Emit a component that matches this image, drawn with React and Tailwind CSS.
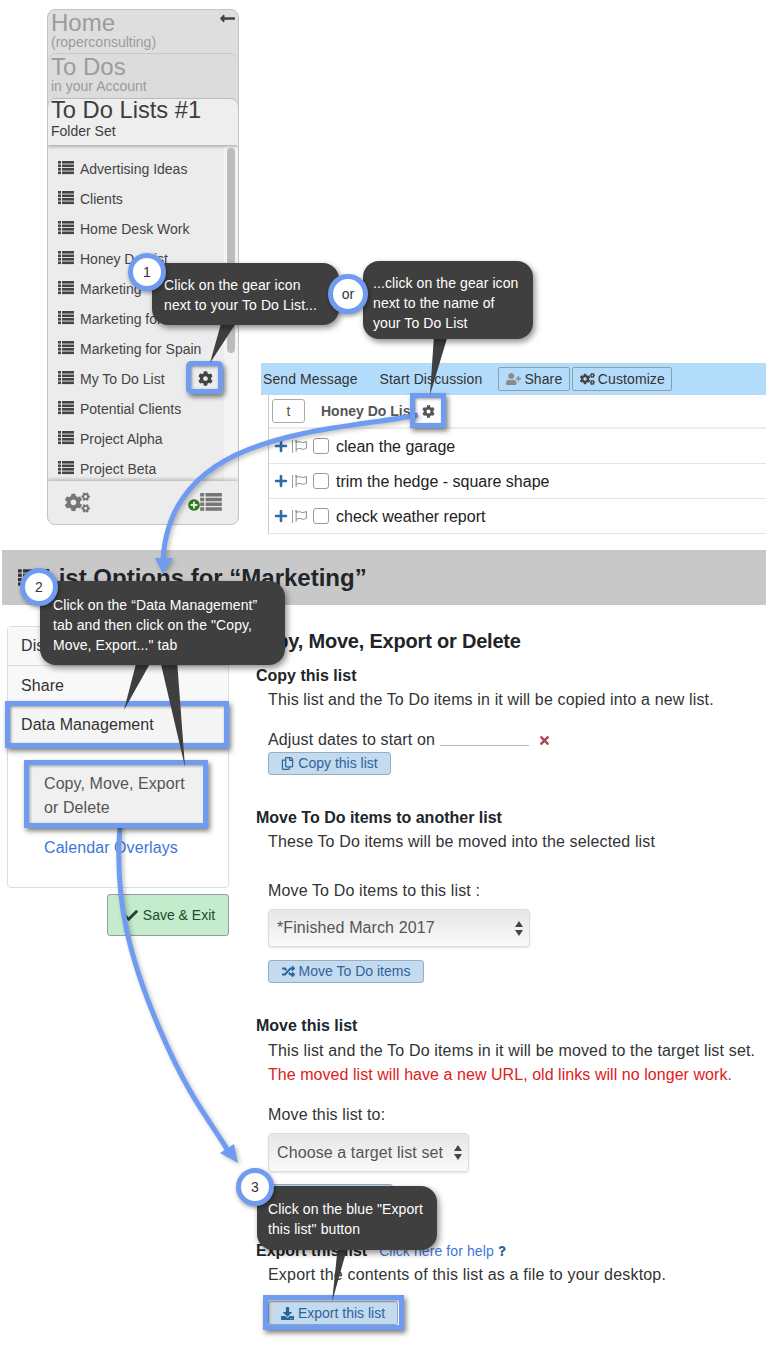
import { FaCog, FaCogs, FaPlus, FaRegFlag, FaUserPlus, FaRandom, FaDownload, FaCheck, FaTimes, FaRegCopy, FaPlusCircle, FaLongArrowAltLeft, FaQuestion } from 'react-icons/fa';

const folders = ['Advertising Ideas', 'Clients', 'Home Desk Work', 'Honey Do List', 'Marketing', 'Marketing for Asia', 'Marketing for Spain', 'My To Do List', 'Potential Clients', 'Project Alpha', 'Project Beta'];
const todos = ['clean the garage', 'trim the hedge - square shape', 'check weather report'];

function ListIcon({ className }) {
  return (
    <svg viewBox="0 0 16 14" className={className} fill="currentColor">
      {[0, 3.5, 7, 10.5].map((y) => (
        <g key={y}>
          <rect x="0" y={y} width="3" height="2.6" />
          <rect x="4" y={y} width="12" height="2.6" />
        </g>
      ))}
    </svg>
  );
}

function Carets() {
  return (
    <svg viewBox="0 0 8 15" className="w-[8px] h-[15px] text-[#444]" fill="currentColor">
      <path d="M4 0 L8 6 L0 6 Z M0 9 L8 9 L4 15 Z" />
    </svg>
  );
}

function Sidebar() {
  return (
    <div className="w-[192px] h-[516px] shrink-0 rounded-lg border border-[#c4c4c4] bg-[#dedede] overflow-hidden flex flex-col">
      <div className="h-[43px] pl-[3px] relative shrink-0 text-[#9b9b9b]">
        <div className="text-[24px] leading-[26px]">Home</div>
        <div className="text-[14px] leading-[16px] -mt-[2px]">(roperconsulting)</div>
        <FaLongArrowAltLeft className="absolute right-[2px] top-[0px] text-[#444] w-[17px] h-[17px]" />
      </div>
      <div className="h-[45px] pl-[3px] shrink-0 rounded-t-lg border-t border-[#c9c9c9] text-[#9b9b9b] bg-[#dcdcdc]">
        <div className="text-[24px] leading-[26px]">To Dos</div>
        <div className="text-[14px] leading-[16px] -mt-[2px]">in your Account</div>
      </div>
      <div className="h-[47px] pl-[3px] shrink-0 rounded-t-lg border-t border-[#bbb] bg-[#eeeeee] text-[#3d3d3d] shadow-[0_2px_3px_rgba(0,0,0,0.25)] z-10">
        <div className="text-[23.7px] leading-[25px] -mt-px">To Do Lists #1</div>
        <div className="text-[14px] leading-[16px]">Folder Set</div>
      </div>
      <div className="h-[336px] shrink-0 flex bg-[#ececec] overflow-hidden">
        <div className="w-[176px] pt-[9px] shrink-0 overflow-hidden">
          {folders.map((name) => (
            <div key={name} className="h-[30px] flex items-center pl-[10px] text-[14px] text-[#444] whitespace-nowrap">
              <ListIcon className="w-[16px] h-[14px] mr-[6px] mb-[2px] text-[#444]" />
              {name}
              {name === 'My To Do List' && <FaCog className="ml-auto mr-[11px] mb-[1px] w-[15px] h-[15px] text-[#444]" />}
            </div>
          ))}
        </div>
        <div className="flex-1 bg-[#f4f4f4] pt-[3px] pl-[3px]">
          <div className="w-[8px] h-[205px] rounded-full bg-[#bcbcbc]" />
        </div>
      </div>
      <div className="flex-1 bg-[#ececec] flex items-center justify-between pl-[17px] pr-[16px] shadow-[0_-2px_3px_rgba(0,0,0,0.2)] z-10">
        <FaCogs className="w-[25px] h-[25px] text-[#777]" />
        <div className="flex items-end">
          <FaPlusCircle className="w-[12px] h-[12px] text-[#2e7d1f] mb-[1px]" />
          <ListIcon className="w-[22px] h-[19px] text-[#777]" />
        </div>
      </div>
    </div>
  );
}

function TodoPanel() {
  return (
    <div className="ml-[22px] flex-1 pt-[354px]">
      <div className="h-[32px] bg-[#b3dcfa] flex items-center pl-[2px] text-[14px] tracking-[0.1px] text-[#333] whitespace-nowrap">
        <span>Send Message</span>
        <span className="ml-[22px]">Start Discussion</span>
        <span className="ml-[16px] h-[24px] w-[72px] border border-[#8aa0b0] rounded-[2px] flex items-center justify-center gap-[3px]">
          <FaUserPlus className="w-[15px] h-[14px] text-[#8a8a8a]" />Share
        </span>
        <span className="ml-[2px] h-[24px] w-[100px] border border-[#8aa0b0] rounded-[2px] flex items-center justify-center gap-[3px]">
          <FaCogs className="w-[15px] h-[14px] text-[#444]" />Customize
        </span>
      </div>
      <div className="ml-[7px] border-l border-[#ccc]">
        <div className="h-[34px] flex items-center pl-[3px] border-b-2 border-[#eee]">
          <span className="w-[33px] h-[24px] border border-[#aaa] rounded-[3px] flex items-center justify-center text-[14px] text-[#555]">t</span>
          <span className="ml-[16px] text-[14px] font-bold text-[#555]">Honey Do List</span>
          <FaCog className="ml-[7px] w-[13px] h-[13px] text-[#555]" />
        </div>
        {todos.map((todo) => (
          <div key={todo} className="h-[35px] flex items-center pl-[5px] border-b border-[#e4e4e4]">
            <FaPlus className="w-[14px] h-[14px] text-[#2d6ca2]" />
            <span className="ml-[4px] w-px h-[13px] bg-[#999]" />
            <FaRegFlag className="ml-[1px] w-[14px] h-[12px] text-[#999]" />
            <span className="ml-[5px] w-[16px] h-[16px] border border-[#999] rounded-[3px]" />
            <span className="ml-[7px] pt-[2px] text-[16px] text-[#222]">{todo}</span>
          </div>
        ))}
      </div>
    </div>
  );
}

function Heading({ children, className = '' }) {
  return <div className={`text-[16px] leading-6 font-bold text-[#212529] ${className}`}>{children}</div>;
}

function Para({ children, className = 'tracking-[0.14px]' }) {
  return <div className={`ml-[12px] text-[16px] leading-6 text-[#333] whitespace-nowrap ${className}`}>{children}</div>;
}

function BlueButton({ icon, children, className = '' }) {
  return (
    <div className={`ml-[12px] flex items-center justify-center gap-[4px] rounded-[3px] border border-[#98aec4] bg-[#c4daef] text-[14px] text-[#2c659c] whitespace-nowrap ${className}`}>
      {icon}
      {children}
    </div>
  );
}

function SelectBox({ children, className = '' }) {
  return (
    <div className={`ml-[12px] flex items-center justify-between pl-[8px] pr-[6px] rounded-[4px] border border-[#ddd] bg-gradient-to-b from-[#e6e6e6] to-[#fafafa] shadow-[0_1px_2px_rgba(0,0,0,0.12)] text-[16px] tracking-[0.1px] text-[#555] whitespace-nowrap ${className}`}>
      {children}
      <Carets />
    </div>
  );
}

function OptionsBody() {
  return (
    <div className="flex pl-[7px]">
      <div className="w-[222px] shrink-0 pt-[21px]">
        <div className="h-[262px] border border-[#ddd] rounded-[4px] text-[16px] tracking-[0.08px] text-[#333]">
          <div className="h-[39px] flex items-center pl-[13px] bg-[#f8f8f8] border-b border-[#ddd]">Display</div>
          <div className="h-[40px] flex items-center pl-[13px] bg-[#f8f8f8]">Share</div>
          <div className="h-[40px] flex items-center pl-[13px] pb-[2px] bg-[#f5f5f5]">Data Management</div>
          <div className="mt-[20px] ml-[22px] w-[172px] h-[58px] bg-[#f0f0f0] pl-[14px] pt-[2px] flex items-center leading-6 text-[#555]">
            Copy, Move, Export<br />or Delete
          </div>
          <div className="mt-[12px] ml-[36px] leading-6 text-[#3d76d9]">Calendar Overlays</div>
        </div>
        <div className="mt-[6px] ml-auto w-[122px] h-[42px] rounded-[3px] border border-[#9a9a9a] bg-[#c3ebcc] flex items-center justify-center gap-[5px] pl-[2px] text-[14px] text-[#1d4a2a]">
          <FaCheck className="w-[15px] h-[15px] text-[#1d4a2a]" />Save &amp; Exit
        </div>
      </div>
      <div className="ml-[27px] flex-1 pt-[22px]">
        <div className="text-[20px] leading-[28px] font-bold tracking-[-0.2px] text-[#212529] -ml-[6px]">Copy, Move, Export or Delete</div>
        <Heading className="mt-[9px]">Copy this list</Heading>
        <Para>This list and the To Do items in it will be copied into a new list.</Para>
        <Para className="mt-[16px] flex items-center tracking-[0.14px]">
          Adjust dates to start on
          <span className="ml-[5px] mt-[10px] w-[89px] h-px bg-[#bbb]" />
          <FaTimes className="ml-[9px] w-[13px] h-[13px] text-[#a94452]" />
        </Para>
        <BlueButton className="w-[123px] h-[23px]" icon={<FaRegCopy className="w-[13px] h-[13px]" />}>Copy this list</BlueButton>
        <Heading className="mt-[31px]">Move To Do items to another list</Heading>
        <Para>These To Do items will be moved into the selected list</Para>
        <Para className="mt-[25px] tracking-[0.14px]">Move To Do items to this list :</Para>
        <SelectBox className="mt-[6px] w-[262px] h-[38px]">*Finished March 2017</SelectBox>
        <BlueButton className="mt-[13px] w-[156px] h-[23px]" icon={<FaRandom className="w-[13px] h-[13px]" />}>Move To Do items</BlueButton>
        <Heading className="mt-[31px]">Move this list</Heading>
        <Para className="mt-[1px] tracking-[0.16px]">This list and the To Do items in it will be moved to the target list set.</Para>
        <Para className="tracking-[0.05px] text-[#e0201b]">The moved list will have a new URL, old links will no longer work.</Para>
        <Para className="mt-[16px] tracking-[0.14px]">Move this list to:</Para>
        <SelectBox className="mt-[6px] w-[201px] h-[39px]">Choose a target list set</SelectBox>
        <BlueButton className="mt-[12px] w-[125px] h-[24px]" icon={null}>Move this list</BlueButton>
        <Heading className="mt-[31px] flex items-baseline">
          Export this list
          <span className="ml-[12px] text-[14px] font-normal tracking-[0.1px] text-[#3d76d9]">Click here for help</span>
          <FaQuestion className="ml-[4px] w-[8px] h-[10px] text-[#2c659c]" />
        </Heading>
        <Para className="tracking-[0.19px]">Export the contents of this list as a file to your desktop.</Para>
        <BlueButton className="mt-[14px] w-[130px] h-[24px]" icon={<FaDownload className="w-[13px] h-[13px]" />}>Export this list</BlueButton>
      </div>
    </div>
  );
}

function Highlight({ className }) {
  return <div className={`absolute z-20 border-[5px] border-[#6f9cf0] shadow-[2px_3px_5px_rgba(0,0,0,0.5),inset_1px_1px_3px_rgba(0,0,0,0.4)] ${className}`} />;
}

function Callout({ className, children }) {
  return (
    <div className={`absolute z-30 rounded-[16px] bg-[#3f3f3f] text-white text-[14px] leading-5 tracking-[0.09px] whitespace-nowrap shadow-[2px_3px_6px_rgba(0,0,0,0.45)] ${className}`}>
      {children}
    </div>
  );
}

function Badge({ className, children }) {
  return (
    <div className={`absolute z-40 rounded-full bg-white border-[5px] border-[#6f9cf0] flex items-center justify-center text-[14px] text-[#333] shadow-[1px_2px_4px_rgba(0,0,0,0.4)] ${className}`}>
      {children}
    </div>
  );
}

function Annotations() {
  return (
    <>
      <svg className="absolute inset-0 z-10 w-[766px] h-[1345px] drop-shadow-[2px_2px_2px_rgba(0,0,0,0.25)]" viewBox="0 0 766 1345" fill="none">
        <path d="M418 415 C 330 432, 170 430, 163 560" stroke="#6f9cf0" strokeWidth="5" />
        <path d="M155 558 L173 558 L163 574 Z" fill="#6f9cf0" />
        <path d="M120 826 C 114 900, 130 960, 160 1030 S 210 1120, 230 1154" stroke="#6f9cf0" strokeWidth="5" />
        <path d="M238 1163 L220 1153 L234 1144 Z" fill="#6f9cf0" />
      </svg>
      <svg className="absolute inset-0 z-30 w-[766px] h-[1345px]" viewBox="0 0 766 1345" fill="#3f3f3f">
        <path d="M222 320 L238 320 L210 363 Z" />
        <path d="M434 335 L448 335 L430 395 Z" />
        <path d="M137 660 L152 660 L124 710 Z" />
        <path d="M160 660 L177 660 L185 767 Z" />
        <path d="M338 1245 L348 1245 L332 1302 Z" />
      </svg>
      <Highlight className="left-[186px] top-[361px] w-[37px] h-[33px] rounded-[5px]" />
      <Highlight className="left-[410px] top-[393px] w-[36px] h-[35px]" />
      <Highlight className="left-[5px] top-[701px] w-[224px] h-[47px]" />
      <Highlight className="left-[24px] top-[760px] w-[184px] h-[68px]" />
      <Highlight className="left-[263px] top-[1295px] w-[141px] h-[35px]" />
      <Callout className="left-[152px] top-[263px] w-[187px] h-[62px] pl-[12px] pt-[12px]">
        Click on the gear icon<br />next to your To Do List...
      </Callout>
      <Callout className="left-[363px] top-[261px] w-[170px] h-[78px] pl-[10px] pt-[12px]">
        ...click on the gear icon<br />next to the name of<br />your To Do List
      </Callout>
      <Callout className="left-[40px] top-[581px] w-[245px] h-[84px] pl-[13px] pt-[14px]">
        Click on the “Data Management”<br />tab and then click on the "Copy,<br />Move, Export..." tab
      </Callout>
      <Callout className="left-[257px] top-[1186px] w-[180px] h-[64px] pl-[11px] pt-[13px]">
        Click on the blue "Export<br />this list" button
      </Callout>
      <Badge className="left-[128px] top-[253px] w-[38px] h-[38px]">1</Badge>
      <Badge className="left-[328px] top-[274px] w-[40px] h-[40px]">or</Badge>
      <Badge className="left-[20px] top-[568px] w-[38px] h-[38px]">2</Badge>
      <Badge className="left-[236px] top-[1168px] w-[38px] h-[38px]">3</Badge>
    </>
  );
}

export default function App() {
  return (
    <div className="relative w-[766px] h-[1345px] overflow-hidden bg-white font-['Liberation_Sans',Arial,sans-serif]">
      <div className="flex pl-[47px] pt-[9px]">
        <Sidebar />
        <TodoPanel />
      </div>
      <div className="mt-[16px] ml-[2px] h-[55px] bg-[#c8c8c8] flex items-center pl-[16px] text-[24px] font-bold text-[#212529] whitespace-nowrap">
        <ListIcon className="w-[20px] h-[18px] mr-[6px] text-[#333]" />
        List Options for “Marketing”
      </div>
      <OptionsBody />
      <Annotations />
    </div>
  );
}
